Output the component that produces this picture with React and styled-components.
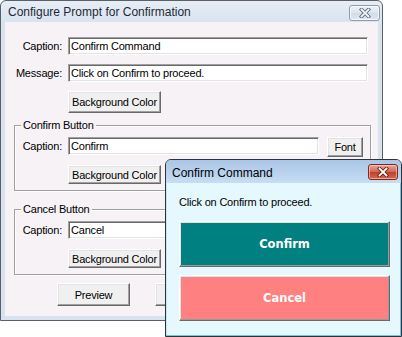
import React from "react";
import styled, { createGlobalStyle } from "styled-components";

const GlobalStyle = createGlobalStyle`
  body {
    margin: 0;
    background: #ffffff;
  }
  * {
    box-sizing: border-box;
  }
`;

const Desktop = styled.div`
  position: relative;
  width: 402px;
  height: 337px;
  overflow: hidden;
  font-family: "Liberation Sans", Arial, sans-serif;
  color: #000;
`;

const Window = styled.div`
  width: 383px;
  border: 1px solid #5b6068;
  border-radius: 6px 6px 0 0;
  background: linear-gradient(#e6edf5, #d8e3ef 24px, #d8e3ef);
  padding: 0 4px 4px;
  display: flex;
  flex-direction: column;
`;

const TitleBar = styled.div`
  height: 21px;
  margin: 0 -4px;
  padding: 0 2px 0 7px;
  display: flex;
  align-items: flex-start;
  justify-content: space-between;
`;

const TitleText = styled.span`
  font-size: 12px;
  line-height: 14px;
  margin-top: ${(p) => p.$top}px;
  color: ${(p) => p.$color};
`;

const CloseButton = styled.div`
  width: ${(p) => p.$w}px;
  height: 16px;
  margin-top: 4px;
  border-radius: 3px;
  border: 1px solid ${(p) => (p.$active ? "#7d2a1f" : "#8e9cae")};
  background: ${(p) =>
    p.$active
      ? "linear-gradient(#e9a99b, #d2644f 50%, #c0402a 51%, #d46a4f)"
      : "linear-gradient(#eef2f7, #dce4ee 50%, #d2dce8 51%, #dfe7f0)"};
  box-shadow: inset 0 0 0 1px ${(p) => (p.$active ? "rgba(255,210,200,0.6)" : "rgba(255,255,255,0.7)")};
  display: flex;
  align-items: center;
  justify-content: center;
`;

const Body = styled.div`
  background: #f6f2f6;
  height: 294px;
  padding-top: 15px;
  display: flex;
  flex-direction: column;
`;

const Row = styled.div`
  display: flex;
  align-items: flex-start;
  padding-right: ${(p) => p.$right}px;
  margin-bottom: ${(p) => p.$gap}px;
`;

const Label = styled.label`
  width: ${(p) => p.$w}px;
  margin-right: 6px;
  text-align: right;
  font-size: 11px;
  letter-spacing: -0.2px;
  line-height: 18px;
  flex-shrink: 0;
`;

const TextBox = styled.input`
  flex: 1;
  min-width: 0;
  height: 18px;
  padding: 0 2px;
  font-family: "Liberation Sans", Arial, sans-serif;
  font-size: 11px;
  letter-spacing: -0.2px;
  color: #000;
  background: #fff;
  border: 1px solid;
  border-color: #a0a0a0 #ffffff #ffffff #a0a0a0;
  box-shadow: inset 1px 1px 0 #696969, inset -1px -1px 0 #e3e3e3;
  outline: none;
`;

const Button = styled.button`
  width: ${(p) => p.$w}px;
  height: ${(p) => p.$h}px;
  margin-left: ${(p) => p.$left || 0}px;
  padding: 0;
  font-family: "Liberation Sans", Arial, sans-serif;
  font-size: 11px;
  letter-spacing: -0.2px;
  color: #000;
  background: #f0f0f0;
  border: 1px solid;
  border-color: #ffffff #696969 #696969 #ffffff;
  box-shadow: inset -1px -1px 0 #a0a0a0, inset 1px 1px 0 #e3e3e3;
  flex-shrink: 0;
`;

const Group = styled.fieldset`
  margin: 0 7px ${(p) => p.$bottom}px 9px;
  padding: 6px 7px 6px 0;
  border: 1px solid #a0a0a0;
  box-shadow: 1px 1px 0 #ffffff, inset 1px 1px 0 #ffffff;
  min-inline-size: 0;
`;

const Legend = styled.legend`
  margin-left: 6px;
  padding: 0 2px;
  font-size: 11px;
  letter-spacing: -0.2px;
  line-height: 12px;
  background: #f6f2f6;
`;

const Footer = styled.div`
  display: flex;
  padding-left: 52px;
  gap: 25px;
`;

const Dialog = styled.div`
  position: absolute;
  left: 165px;
  top: 159px;
  width: 237px;
  height: 178px;
  border: 1px solid #2f3338;
  border-radius: 6px 6px 0 0;
  background: #e5f8fd;
  box-shadow: inset -1px -1px 0 #7cc2ea, inset 1px 0 0 #c6e6f6;
  display: flex;
  flex-direction: column;
`;

const DialogTitle = styled.div`
  height: 23px;
  padding: 0 3px 0 6px;
  border-radius: 5px 5px 0 0;
  background: linear-gradient(#aac6e6, #bad3ee 60%, #c8ddf2);
  display: flex;
  align-items: flex-start;
  justify-content: space-between;
`;

const DialogBody = styled.div`
  padding: 13px 11px 0 13px;
  display: flex;
  flex-direction: column;
  gap: 8px;
`;

const Message = styled.div`
  font-size: 11px;
  letter-spacing: -0.2px;
  line-height: 13px;
  margin-bottom: 4px;
`;

const BigButton = styled.button`
  height: 46px;
  width: 100%;
  padding: 0;
  font-family: "DejaVu Sans", Verdana, sans-serif;
  font-weight: bold;
  font-size: 11.5px;
  color: #ffffff;
  background: ${(p) => p.$bg};
  border: 1px solid;
  border-color: #ffffff #6a6a6a #6a6a6a #ffffff;
  box-shadow: inset -1px -1px 0 #9a9a9a, inset 1px 1px 0 #e3e3e3;
`;

const CloseIcon = ({ outline, fill }) => (
  <svg width="12" height="10" viewBox="0 0 12 10">
    <path d="M2.5 1.5 L9.5 8.5 M9.5 1.5 L2.5 8.5" stroke={outline} strokeWidth="3.6" strokeLinecap="square" />
    <path d="M2.5 1.5 L9.5 8.5 M9.5 1.5 L2.5 8.5" stroke={fill} strokeWidth="1.8" strokeLinecap="square" />
  </svg>
);

const ButtonGroup = ({ title, caption, bottom }) => (
  <Group $bottom={bottom}>
    <Legend>{title}</Legend>
    <Row $right={0} $gap={8}>
      <Label $w={47}>Caption:</Label>
      <TextBox readOnly value={caption} />
      <Button $w={36} $h={20} $left={8}>Font</Button>
    </Row>
    <Row $right={0} $gap={0}>
      <Button $w={93} $h={19} $left={53}>Background Color</Button>
    </Row>
  </Group>
);

const App = () => {
  return (
    <Desktop>
      <GlobalStyle />
      <Window>
        <TitleBar>
          <TitleText $top={4} $color="#1f2833">Configure Prompt for Confirmation</TitleText>
          <CloseButton $w={31}>
            <CloseIcon outline="#5f6b7a" fill="#f4f6f9" />
          </CloseButton>
        </TitleBar>
        <Body>
          <Row $right={10} $gap={9}>
            <Label $w={57}>Caption:</Label>
            <TextBox readOnly value="Confirm Command" />
          </Row>
          <Row $right={10} $gap={9}>
            <Label $w={57}>Message:</Label>
            <TextBox readOnly value="Click on Confirm to proceed." />
          </Row>
          <Row $right={10} $gap={6}>
            <Button $w={93} $h={22} $left={63}>Background Color</Button>
          </Row>
          <ButtonGroup title="Confirm Button" caption="Confirm" bottom={12} />
          <ButtonGroup title="Cancel Button" caption="Cancel" bottom={8} />
          <Footer>
            <Button $w={73} $h={23}>Preview</Button>
            <Button $w={73} $h={23}>OK</Button>
          </Footer>
        </Body>
      </Window>

      <Dialog>
        <DialogTitle>
          <TitleText $top={6} $color="#000">Confirm Command</TitleText>
          <CloseButton $w={30} $active>
            <CloseIcon outline="#6b1f14" fill="#ffffff" />
          </CloseButton>
        </DialogTitle>
        <DialogBody>
          <Message>Click on Confirm to proceed.</Message>
          <BigButton $bg="#008080">Confirm</BigButton>
          <BigButton $bg="#ff8080">Cancel</BigButton>
        </DialogBody>
      </Dialog>
    </Desktop>
  );
};

export default App;
